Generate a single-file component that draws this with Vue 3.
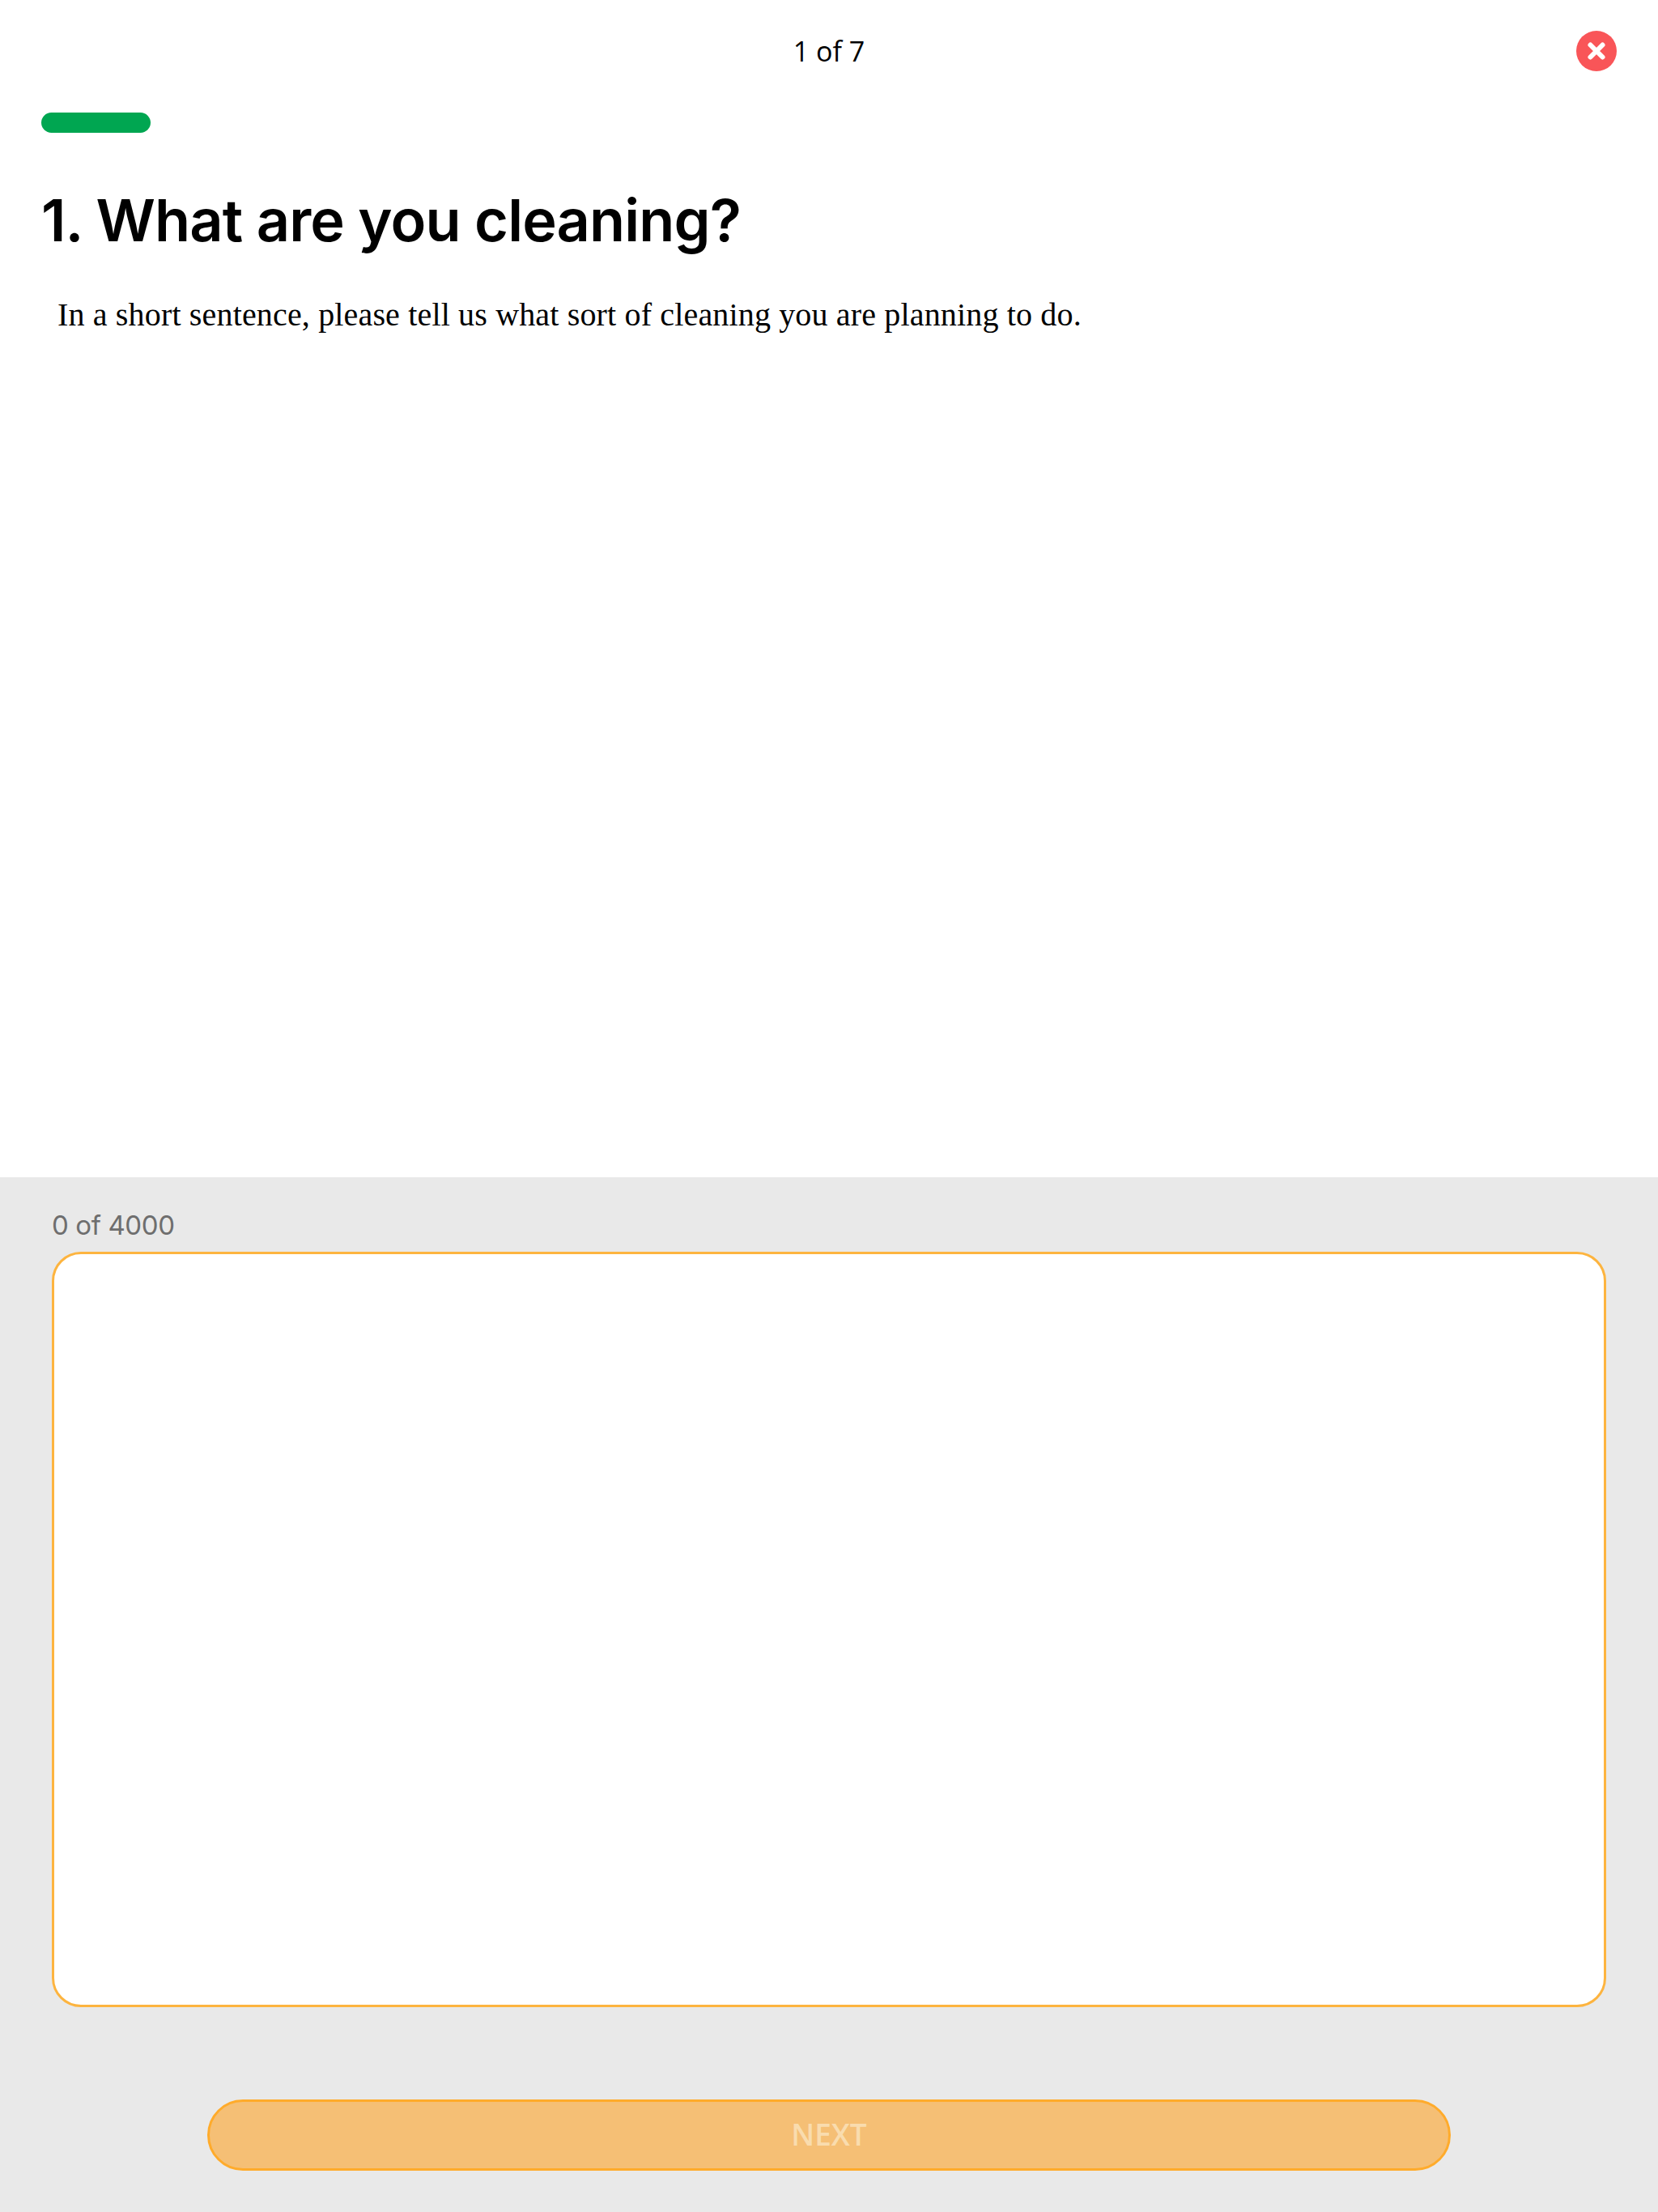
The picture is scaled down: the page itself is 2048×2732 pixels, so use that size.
<script setup>
import { computed, ref } from "vue";

// 当前问题
const answer = ref("");
const maxLength = 4000;
const step = 1;
const total = 7;

const progressWidth = computed(() => `${(step / total) * 945}px`);
const canContinue = computed(() => answer.value.trim().length > 0);
</script>

<template>
  <div class="survey">
    <section class="question">
      <header class="top-bar">
        <span></span>
        <span class="step">{{ step }} of {{ total }}</span>
        <button class="close-btn" title="Close">
          <svg viewBox="0 0 50 50" width="50" height="50">
            <circle cx="25" cy="25" r="25" fill="#f95558" />
            <path d="M17.5 17.5 32.5 32.5M32.5 17.5 17.5 32.5" stroke="#fff" stroke-width="6" stroke-linecap="round" />
          </svg>
        </button>
      </header>

      <div class="progress">
        <div class="progress-bar" :style="{ width: progressWidth }"></div>
      </div>

      <h1 class="title">1. What are you cleaning?</h1>
      <p class="description">In a short sentence, please tell us what sort of cleaning you are planning to do.</p>
    </section>

    <section class="answer">
      <div class="counter">{{ answer.length }} of {{ maxLength }}</div>
      <textarea v-model="answer" class="answer-input" :maxlength="maxLength"></textarea>
      <button class="next-btn" :disabled="!canContinue">NEXT</button>
    </section>
  </div>
</template>

<style>
html,
body {
  margin: 0;
  background: #fff;
}
</style>

<style scoped>
.survey {
  width: 2048px;
  height: 2732px;
  display: flex;
  flex-direction: column;
  overflow: hidden;
}

.question {
  height: 1454px;
  padding: 38px 51px 0;
  box-sizing: border-box;
  background-color: #fff;
}

.top-bar {
  display: grid;
  grid-template-columns: 1fr auto 1fr;
  align-items: center;
  height: 50px;
}

.step {
  font-family: "Open Sans", sans-serif;
  font-size: 34px;
  line-height: 50px;
  color: #000;
}

.close-btn {
  justify-self: end;
  width: 50px;
  height: 50px;
  padding: 0;
  border: none;
  background: none;
  cursor: pointer;
}

.close-btn svg {
  display: block;
}

.progress {
  margin-top: 51px;
  height: 25px;
}

.progress-bar {
  height: 100%;
  border-radius: 13px;
  background-color: #00a651;
}

.title {
  margin: 64px 0 0;
  font-family: Inter, sans-serif;
  font-size: 72px;
  font-weight: 600;
  line-height: 88px;
  letter-spacing: -0.85px;
  color: #000;
}

.description {
  margin: 49px 0 0 20px;
  font-family: "Liberation Serif", serif;
  font-size: 40px;
  line-height: 48px;
  letter-spacing: 0.16px;
  color: #000;
}

.answer {
  flex: 1;
  display: flex;
  flex-direction: column;
  align-items: center;
  padding: 0 64px;
  background-color: #e9e9e9;
}

.counter {
  align-self: flex-start;
  margin-top: 37px;
  font-family: Inter, sans-serif;
  font-size: 33px;
  line-height: 44px;
  letter-spacing: -0.4px;
  color: #6e6e6e;
}

.answer-input {
  display: block;
  width: 100%;
  height: 933px;
  margin-top: 11px;
  padding: 20px;
  box-sizing: border-box;
  border: 3px solid #fdb43f;
  border-radius: 36px;
  outline: none;
  resize: none;
  background-color: #fff;
  font-family: Inter, sans-serif;
  font-size: 36px;
}

.next-btn {
  width: 1536px;
  height: 88px;
  margin-top: 114px;
  padding: 0 0 3px;
  border: 3px solid #ffab2b;
  border-radius: 44px;
  background-color: #f5bf75;
  font-family: "Open Sans", sans-serif;
  font-size: 37px;
  font-weight: 600;
  color: #f9dcae;
  cursor: pointer;
}

.next-btn:disabled {
  cursor: default;
}
</style>
